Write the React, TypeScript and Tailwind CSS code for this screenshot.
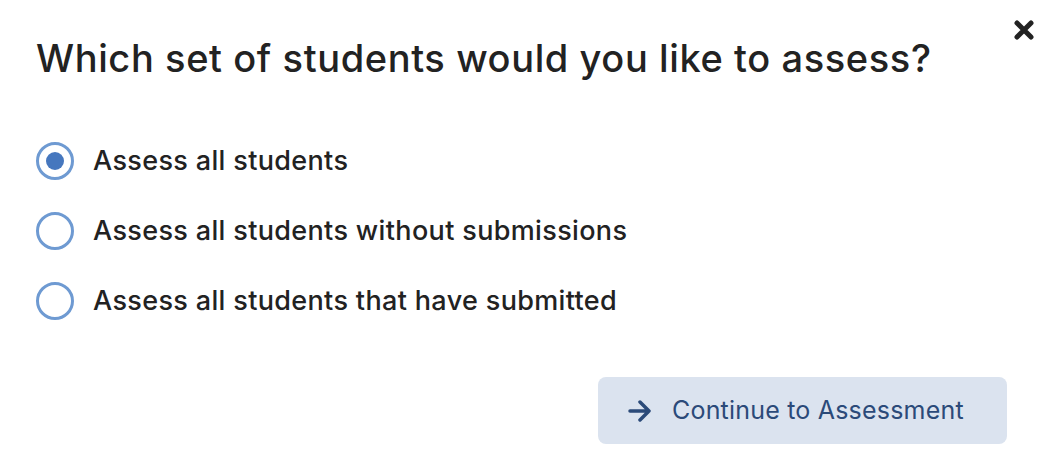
import { useState } from 'react';

const options = [
  'Assess all students',
  'Assess all students without submissions',
  'Assess all students that have submitted',
];

export default function App() {
  const [selected, setSelected] = useState(0);

  return (
    <div
      className="relative w-[1056px] h-[476px] bg-white text-[#222222]"
      style={{ fontFamily: 'Inter, "Noto Sans", sans-serif' }}
    >
      {/* close */}
      <button className="absolute right-[20px] top-[18px] w-[24px] h-[24px] flex items-center justify-center">
        <svg width="22" height="22" viewBox="0 0 22 22">
          <path d="M4 4 L18 18 M18 4 L4 18" stroke="#222" strokeWidth="5" strokeLinecap="round" />
        </svg>
      </button>

      <div className="pl-[36px] pr-[48px] pt-[34px]">
        <h1 className="text-[38px] leading-[48px] font-medium tracking-[0.6px]">
          Which set of students would you like to assess?
        </h1>

        <div className="mt-[60px] flex flex-col gap-[32px]">
          {options.map((label, i) => (
            <label
              key={label}
              className="flex items-center gap-[19px] cursor-pointer h-[38px]"
              onClick={() => setSelected(i)}
            >
              <span className="w-[38px] h-[38px] rounded-full border-[3px] border-[#6e9ad2] flex items-center justify-center">
                {selected === i && <span className="w-[18px] h-[18px] rounded-full bg-[#4677be]" />}
              </span>
              <span className="text-[27px] font-medium tracking-[0.35px]">{label}</span>
            </label>
          ))}
        </div>

        <div className="mt-[57px] flex justify-end pr-[1px]">
          <button className="w-[409px] h-[67px] rounded-[8px] bg-[#dbe3ef] text-[#2b4a79] flex items-center pl-[30px] gap-[20px]">
            <svg width="24" height="22" viewBox="0 0 24 22">
              <path d="M2 11 H21 M12 2 L21 11 L12 20" stroke="#2b4a79" strokeWidth="3.5" fill="none" strokeLinecap="round" strokeLinejoin="round" />
            </svg>
            <span className="text-[25px] tracking-[0.2px]">Continue to Assessment</span>
          </button>
        </div>
      </div>
    </div>
  );
}
